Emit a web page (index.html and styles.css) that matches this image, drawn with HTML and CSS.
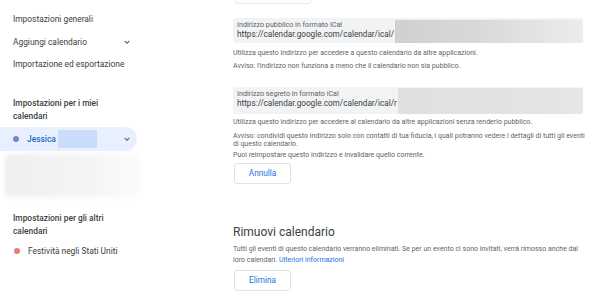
FILE: index.html
```html
<!DOCTYPE html>
<html lang="it">
<head>
<meta charset="utf-8">
<title>Impostazioni</title>
<link rel="stylesheet" href="styles.css">
</head>
<body>
<div class="page">
  <nav class="sidebar">
    <div class="nav-item">Impostazioni generali</div>
    <div class="nav-item has-chevron">Aggiungi calendario
      <svg class="chev" viewBox="0 0 10 10" width="8" height="8"><path d="M2 3.5 L5 6.5 L8 3.5" fill="none" stroke="#5f6368" stroke-width="1.3"/></svg>
    </div>
    <div class="nav-item">Importazione ed esportazione</div>

    <div class="nav-heading first">Impostazioni per i miei<br>calendari</div>
    <div class="cal-row active">
      <span class="dot dot-blue"></span>
      <span class="cal-name">Jessica</span>
      <span class="redact"></span>
      <svg class="chev" viewBox="0 0 10 10" width="8" height="8"><path d="M2 3.5 L5 6.5 L8 3.5" fill="none" stroke="#5f6368" stroke-width="1.3"/></svg>
    </div>
    <div class="blurred"></div>

    <div class="nav-heading second">Impostazioni per gli altri<br>calendari</div>
    <div class="cal-row">
      <span class="dot dot-red"></span>
      <span class="cal-other">Festività negli Stati Uniti</span>
    </div>
  </nav>

  <main class="content">
    <div class="stub"></div>

    <div class="field field-1">
      <div class="field-label">Indirizzo pubblico in formato iCal</div>
      <div class="field-value">https://calendar.google.com/calendar/ical/<span class="mask mask-1"></span></div>
    </div>
    <p class="note n1">Utilizza questo indirizzo per accedere a questo calendario da altre applicazioni.</p>
    <p class="note n2">Avviso: l'indirizzo non funziona a meno che il calendario non sia pubblico.</p>

    <div class="field field-2">
      <div class="field-label">Indirizzo segreto in formato iCal</div>
      <div class="field-value">https://calendar.google.com/calendar/ical/r<span class="mask mask-2"></span></div>
    </div>
    <p class="note n3">Utilizza questo indirizzo per accedere al calendario da altre applicazioni senza renderlo pubblico.</p>
    <p class="note n4">Avviso: condividi questo indirizzo solo con contatti di tua fiducia, i quali potranno vedere i dettagli di tutti gli eventi di questo calendario.</p>
    <p class="note n5">Puoi reimpostare questo indirizzo e invalidare quello corrente.</p>
    <button class="btn btn-1">Annulla</button>

    <h2 class="section-title">Rimuovi calendario</h2>
    <p class="note n6">Tutti gli eventi di questo calendario verranno eliminati. Se per un evento ci sono invitati, verrà rimosso anche dal loro calendari. <a class="link">Ulteriori informazioni</a></p>
    <button class="btn btn-2">Elimina</button>
  </main>
</div>
</body>
</html>
```

FILE: styles.css
```css
* { box-sizing: border-box; }
html, body { margin: 0; padding: 0; background: #fff; }
body {
  font-family: Roboto, "Noto Sans", Arial, sans-serif;
  color: #3c4043;
  width: 610px;
  height: 296px;
  overflow: hidden;
}
.page { display: flex; }

.sidebar { width: 220px; flex: none; padding-top: 8px; }
.nav-item {
  height: 22.5px;
  line-height: 22px;
  font-size: 8.4px;
  padding-left: 13px;
  width: 137px;
  display: flex;
  align-items: center;
  justify-content: space-between;
  padding-right: 6px;
}
.nav-heading {
  font-size: 8.4px;
  line-height: 13.5px;
  padding-left: 13px;
  font-weight: 500;
  color: #3c4043;
}
.nav-heading.first { margin-top: 21px; }
.nav-heading.second { margin-top: 15px; }

.cal-row {
  height: 24px;
  width: 137px;
  display: flex;
  align-items: center;
  padding-left: 13px;
  padding-right: 6px;
  font-size: 8.4px;
}
.cal-row.active {
  margin-top: 3px;
  background: #e8f0fe;
  border-radius: 0 12px 12px 0;
}
.dot { width: 6px; height: 6px; border-radius: 50%; flex: none; margin-right: 8px; }
.dot-blue { background: #7986cb; }
.dot-red { background: #e67c73; margin-left: 1px; margin-right: 8px; }
.cal-name { color: #1967d2; font-weight: 500; }
.redact {
  width: 39px; height: 18px;
  margin-left: 2px;
  background: #c9dcfa;
}
.cal-row .chev { margin-left: auto; }
.blurred {
  margin: 3px 0 0 5px;
  width: 136px;
  height: 43px;
  border-radius: 4px;
  background: linear-gradient(90deg, #efefef 0%, #f4f4f4 60%, #fcfcfc 100%);
  filter: blur(2px);
}
.cal-other { color: #3c4043; }

.content { padding-left: 13px; flex: none; width: 375px; }
.stub {
  width: 76px; height: 4px;
  margin-left: 2px;
  border: 1px solid #e8e8e8;
  border-top: none;
  border-radius: 0 0 3px 3px;
}
.field {
  background: #f1f3f4;
  border-radius: 3px;
  padding: 3px 0 0 4px;
  width: 350px;
  overflow: hidden;
  display: flex;
  flex-direction: column;
}
.field-1 { margin-top: 14px; height: 25px; }
.field-2 { margin-top: 16px; height: 27px; }
.field-label { font-size: 7.2px; line-height: 8px; color: #5f6368; }
.field-value {
  flex: 1;
  display: flex;
  align-items: flex-start;
  font-size: 8.2px; line-height: 11px; color: #3c4043;
  white-space: nowrap;
}
.mask { flex: 1; align-self: stretch; margin-left: 1px; }
.mask-1 { margin-top: -9px; background: linear-gradient(90deg, #d0d0d0 0%, #d9d9d9 45%, #ececec 100%); }
.mask-2 { margin-top: -10px; background: linear-gradient(90deg, #e0e0e0 0%, #e3e3e3 60%, #e6e6e6 100%); }

.note {
  margin: 0;
  font-size: 7px;
  line-height: 10px;
  color: #5f6368;
  width: 358px;
}
.n1 { margin-top: 5px; }
.n2 { margin-top: 3px; }
.n3 { margin-top: 3px; }
.n4 { margin-top: 4.5px; line-height: 8.5px; }
.n5 { margin-top: 1px; }
.n6 { margin-top: 4px; line-height: 11px; }
.link { color: #1a73e8; }

.btn {
  display: block;
  font-family: inherit;
  font-size: 8.2px;
  color: #1a73e8;
  background: #fff;
  border: 1px solid #e0e2e5;
  border-radius: 3px;
  width: 57px;
  height: 21px;
  padding: 0;
  margin-left: 1px;
}
.btn-1 { margin-top: 3px; }
.btn-2 { margin-top: 3.5px; }

.section-title {
  margin: 41.5px 0 0 0;
  font-size: 12px;
  line-height: 15px;
  font-weight: 400;
  color: #3c4043;
}
```
